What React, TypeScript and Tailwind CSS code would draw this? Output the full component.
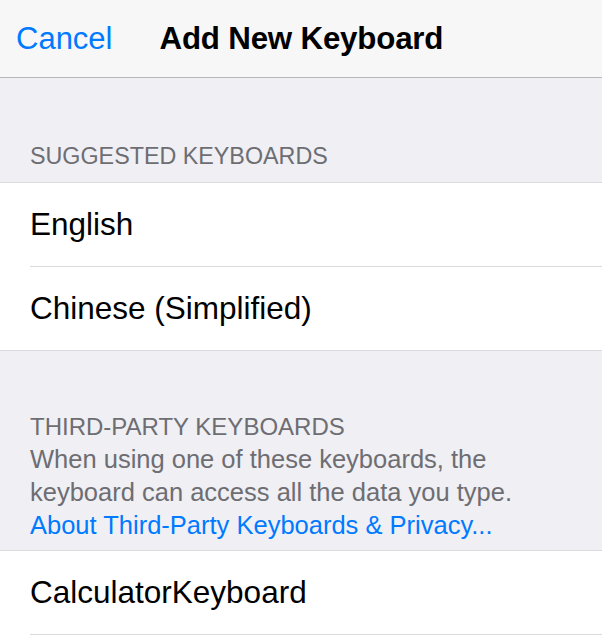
const font = { fontFamily: '"Liberation Sans", Arial, sans-serif' };

function Row({ label, last }: { label: string; last?: boolean }) {
  return (
    <div className="bg-white pl-[30px]">
      <div
        className={`flex items-center text-[31.5px] text-black ${
          last ? "h-[83px]" : "h-[84px] border-b border-[#d9d9de]"
        }`}
      >
        {label}
      </div>
    </div>
  );
}

export default function App() {
  return (
    <div className="w-[602px] h-[640px] bg-[#efeff4] overflow-hidden" style={font}>
      <header className="h-[78px] bg-[#f7f7f7] border-b border-[#b7b7ba] flex items-center gap-[47px] pl-[16px]">
        <button className="text-[31px] text-[#007aff] leading-none">Cancel</button>
        <h1 className="text-[31.3px] font-bold text-black leading-none tracking-[-0.2px]">
          Add New Keyboard
        </h1>
      </header>

      <div className="h-[104px] flex items-end pl-[30px] pb-[14px]">
        <span className="text-[23.3px] text-[#6d6d72] uppercase leading-none">
          Suggested Keyboards
        </span>
      </div>
      <div className="border-y border-[#d9d9de]">
        <Row label="English" />
        <Row label="Chinese (Simplified)" last />
      </div>

      <div className="pt-[59px] pb-[8px] pl-[30px] text-[25.5px] leading-[33px] text-[#6d6d72]">
        <div className="uppercase text-[24px]">Third-Party Keyboards</div>
        <div>When using one of these keyboards, the</div>
        <div>keyboard can access all the data you type.</div>
        <div className="text-[#007aff]">About Third-Party Keyboards &amp; Privacy...</div>
      </div>
      <div className="border-t border-[#d9d9de]">
        <Row label="CalculatorKeyboard" />
        <div className="h-[83px] bg-white" />
      </div>
    </div>
  );
}
